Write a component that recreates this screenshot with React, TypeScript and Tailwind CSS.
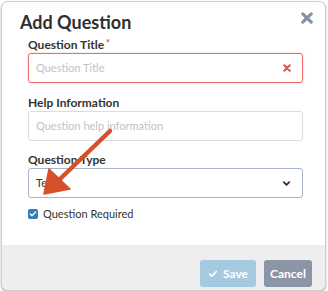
import { Check, ChevronDown } from 'lucide-react'

function XMark({ size, color, stroke }: { size: number; color: string; stroke: number }) {
  return (
    <svg width={size} height={size} viewBox="0 0 10 10">
      <path d="M1.5 1.5 L8.5 8.5 M8.5 1.5 L1.5 8.5" stroke={color} strokeWidth={stroke} strokeLinecap="round" />
    </svg>
  )
}

function Label({ children, required }: { children: string; required?: boolean }) {
  return (
    <div className="h-[16px] text-[12px] leading-[16px] font-bold text-[#333]">
      {children}
      {required && <span className="ml-[2px] align-top text-[9px] leading-[12px] text-[#e04848]">*</span>}
    </div>
  )
}

export default function App() {
  return (
    <div className="relative h-[291px] w-[328px] bg-white pl-[1px] pt-[1px]" style={{ fontFamily: 'Lato, "Open Sans", sans-serif' }}>
      <div className="w-[325px] overflow-hidden rounded-[7px] border border-[#cfcfcf] bg-white shadow-[0_1px_2px_rgba(0,0,0,0.35)]">
        {/* Header */}
        <div className="flex h-[35px] items-start justify-between pl-[18px] pr-[12px] pt-[9px]">
          <h1 className="text-[18px] leading-[22px] font-bold text-[#2f2f2f]">Add Question</h1>
          <div className="mt-[1px]">
            <XMark size={12} color="#8791a2" stroke={2.6} />
          </div>
        </div>

        {/* Body */}
        <div className="flex flex-col pl-[26px] pr-[22px]">
          <Label required>Question Title</Label>
          <div className="flex h-[30px] items-center justify-between rounded-[3px] border-[1.5px] border-[#f06a6a] pl-[7px] pr-[11px] shadow-[0_0_2px_rgba(240,80,80,0.4)]">
            <span className="text-[11px] text-[#c2c2c2]">Question Title</span>
            <XMark size={8} color="#ec4b4b" stroke={2.4} />
          </div>

          <div className="mt-[12px]">
            <Label>Help Information</Label>
          </div>
          <div className="flex h-[30px] items-center rounded-[3px] border border-[#dcdcdc] pl-[7px]">
            <span className="text-[11px] text-[#c2c2c2]">Question help information</span>
          </div>

          <div className="mt-[11px]">
            <Label>Question Type</Label>
          </div>
          <div className="flex h-[30px] items-center justify-between rounded-[3px] border border-[#a8b3cb] pl-[7px] pr-[10px]">
            <span className="text-[11px] text-[#333]">Text</span>
            <ChevronDown size={11} strokeWidth={4} color="#333" />
          </div>

          <div className="mt-[9px] flex h-[14px] items-center gap-[5px]">
            <div className="flex h-[10px] w-[10px] items-center justify-center rounded-[2px] bg-[#2f7fc0]">
              <Check size={8} strokeWidth={4} color="#fff" />
            </div>
            <span className="text-[11px] text-[#333]">Question Required</span>
          </div>
          <div className="h-[24px]" />
        </div>

        {/* Footer */}
        <div className="flex h-[45px] items-start justify-end gap-[8px] bg-[#eeeeee] pr-[13px] pt-[15px]">
          <button className="flex h-[27px] w-[56px] items-center justify-center gap-[5px] rounded-[3px] bg-[#a5c9df] text-[12px] font-bold text-white">
            <Check size={10} strokeWidth={4} />
            Save
          </button>
          <button className="flex h-[27px] w-[48px] items-center justify-center rounded-[3px] bg-[#8c95a6] text-[12px] font-bold text-white">
            Cancel
          </button>
        </div>
      </div>

      {/* Annotation arrow */}
      <svg className="pointer-events-none absolute left-0 top-0" width="328" height="291">
        <line x1="110" y1="131" x2="60" y2="179" stroke="#d6502a" strokeWidth="4.5" strokeLinecap="round" />
        <polygon points="44,194 49,169 70,189" fill="#d6502a" stroke="#d6502a" strokeWidth="1.5" strokeLinejoin="round" />
      </svg>
    </div>
  )
}
